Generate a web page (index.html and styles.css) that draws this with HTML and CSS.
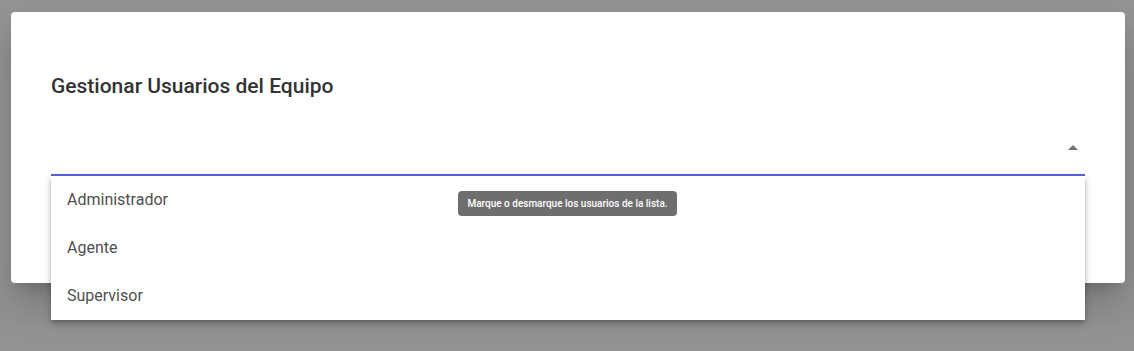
FILE: index.html
```html
<!DOCTYPE html>
<html lang="es">
<head>
    <meta charset="UTF-8">
    <meta name="viewport" content="width=device-width, initial-scale=1.0">
    <title>Gestionar Usuarios del Equipo</title>
    <link rel="stylesheet" href="styles.css">
</head>
<body>
    <div class="dialog">
        <div class="dialog-title">Gestionar Usuarios del Equipo</div>
        <div class="select-field">
            <div class="select-input">
                <span class="select-arrow"></span>
            </div>
            <ul class="select-menu">
                <li class="select-option">Administrador</li>
                <li class="select-option">Agente</li>
                <li class="select-option">Supervisor</li>
            </ul>
            <div class="tooltip">Marque o desmarque los usuarios de la lista.</div>
        </div>
    </div>
</body>
</html>
```

FILE: styles.css
```css
body {
    margin: 0;
    height: 351px;
    overflow: hidden;
    background: #939393;
    font-family: Roboto, 'Noto Sans', sans-serif;
    padding: 12px 9px 0 11px;
    box-sizing: border-box;
}
.dialog {
    background: #ffffff;
    border-radius: 4px;
    height: 271px;
    padding: 58px 40px 0 40px;
    box-sizing: border-box;
    box-shadow: 0 11px 15px -7px rgba(0,0,0,0.2), 0 24px 38px 3px rgba(0,0,0,0.14);
}
.dialog-title {
    font-size: 21px;
    font-weight: 500;
    line-height: 32px;
    color: #333333;
}
.select-field {
    position: relative;
    margin-top: 40px;
}
.select-input {
    height: 32px;
    border-bottom: 2px solid #5c62e0;
    display: flex;
    justify-content: flex-end;
    align-items: flex-start;
}
.select-arrow {
    width: 0;
    height: 0;
    border-left: 5px solid transparent;
    border-right: 5px solid transparent;
    border-bottom: 5px solid #757575;
    margin-right: 7px;
    margin-top: 3px;
}
.select-menu {
    position: absolute;
    top: 34px;
    left: 0;
    right: 0;
    margin: 0;
    padding: 0;
    list-style: none;
    background: #ffffff;
    box-shadow: 0 2px 4px -1px rgba(0,0,0,0.2), 0 4px 5px 0 rgba(0,0,0,0.14), 0 1px 10px 0 rgba(0,0,0,0.12);
}
.select-option {
    height: 48px;
    line-height: 48px;
    padding: 0 16px;
    font-size: 16px;
    color: #505050;
}
.tooltip {
    position: absolute;
    top: 49px;
    left: 407px;
    width: 219px;
    height: 25px;
    box-sizing: border-box;
    background: #6e6e6e;
    color: #ffffff;
    font-size: 10px;
    font-weight: 500;
    line-height: 25px;
    text-align: center;
    border-radius: 4px;
}
```
